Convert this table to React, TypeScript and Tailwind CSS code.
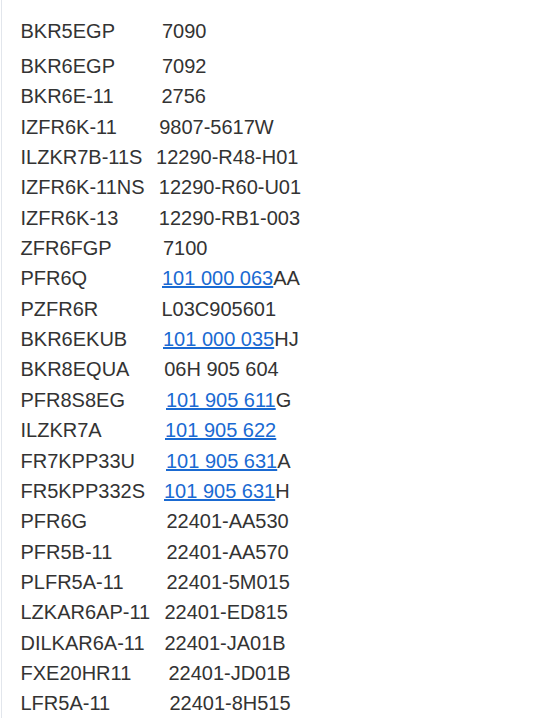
import React from "react";

type Row = {
  a: string;
  w: string;
  link?: string;
  rest?: string;
};

const rows: Row[] = [
  { a: "BKR5EGP", w: "w-[141.5px]", rest: "7090" },
  { a: "BKR6EGP", w: "w-[141.5px]", rest: "7092" },
  { a: "BKR6E-11", w: "w-[141px]", rest: "2756" },
  { a: "IZFR6K-11", w: "w-[138.7px]", rest: "9807-5617W" },
  { a: "ILZKR7B-11S", w: "w-[135.6px]", rest: "12290-R48-H01" },
  { a: "IZFR6K-11NS", w: "w-[138.3px]", rest: "12290-R60-U01" },
  { a: "IZFR6K-13", w: "w-[138.3px]", rest: "12290-RB1-003" },
  { a: "ZFR6FGP", w: "w-[142.5px]", rest: "7100" },
  { a: "PFR6Q", w: "w-[141.5px]", link: "101 000 063", rest: "AA" },
  { a: "PZFR6R", w: "w-[141px]", rest: "L03C905601" },
  { a: "BKR6EKUB", w: "w-[142.5px]", link: "101 000 035", rest: "HJ" },
  { a: "BKR8EQUA", w: "w-[143.7px]", rest: "06H 905 604" },
  { a: "PFR8S8EG", w: "w-[145.5px]", link: "101 905 611", rest: "G" },
  { a: "ILZKR7A", w: "w-[144.5px]", link: "101 905 622" },
  { a: "FR7KPP33U", w: "w-[145.5px]", link: "101 905 631", rest: "A" },
  { a: "FR5KPP332S", w: "w-[143.5px]", link: "101 905 631", rest: "H" },
  { a: "PFR6G", w: "w-[145.9px]", rest: "22401-AA530" },
  { a: "PFR5B-11", w: "w-[145.9px]", rest: "22401-AA570" },
  { a: "PLFR5A-11", w: "w-[145.9px]", rest: "22401-5M015" },
  { a: "LZKAR6AP-11", w: "w-[143.9px]", rest: "22401-ED815" },
  { a: "DILKAR6A-11", w: "w-[143.9px]", rest: "22401-JA01B" },
  { a: "FXE20HR11", w: "w-[147.9px]", rest: "22401-JD01B" },
  { a: "LFR5A-11", w: "w-[148.9px]", rest: "22401-8H515" },
];

export default function App() {
  return (
    <div className="min-h-screen bg-white pl-[1px]">
      <div
        className="min-h-screen border-l border-[#e2e6ec] pl-[18.5px] pt-[15.9px] text-[20px] leading-[30.36px] text-[#333333]"
        style={{ fontFamily: '"Liberation Sans", Arial, sans-serif' }}
      >
        {rows.map((r, i) => (
          <div key={i} className={i === 0 ? "flex whitespace-nowrap mb-[4.64px]" : "flex whitespace-nowrap"}>
            <span className={`${r.w} shrink-0`}>{r.a}</span>
            <span>
              {r.link ? (
                <a href="#" className="text-[#1a6ad2] underline">
                  {r.link}
                </a>
              ) : null}
              {r.rest}
            </span>
          </div>
        ))}
      </div>
    </div>
  );
}
